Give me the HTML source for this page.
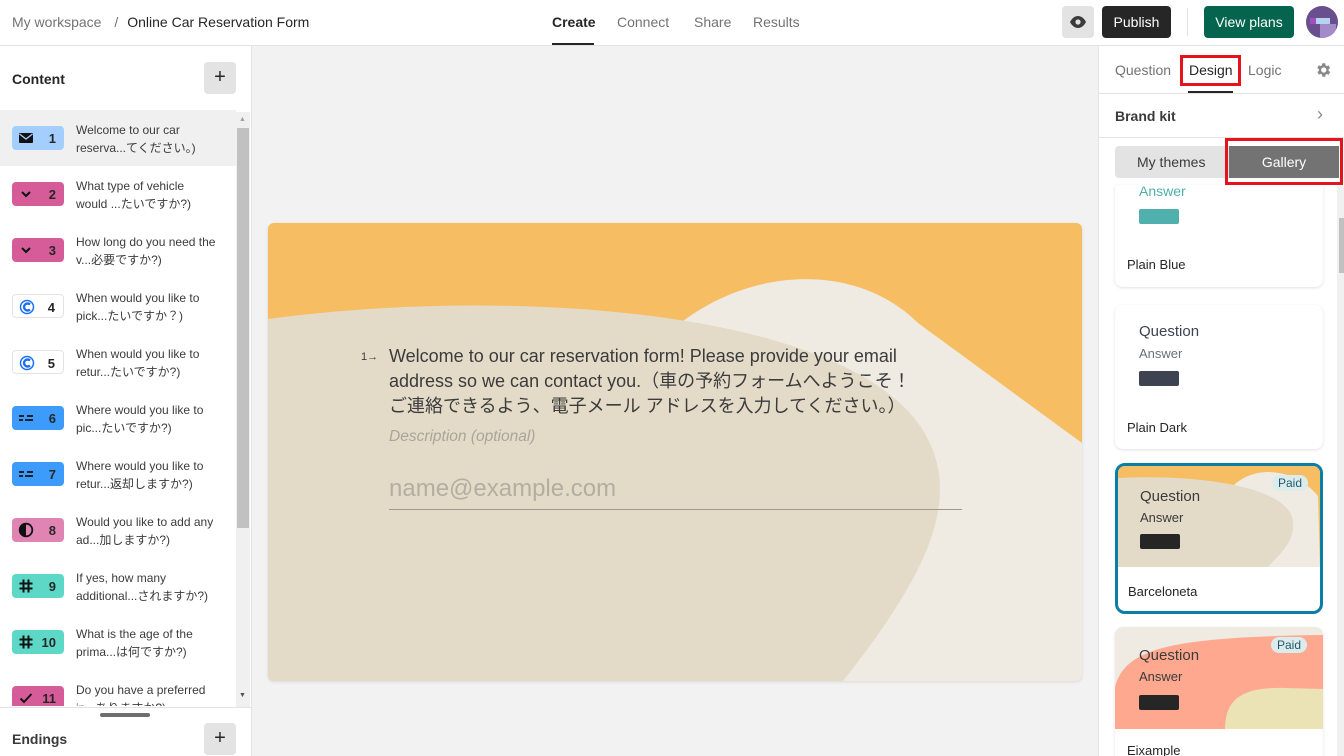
<!DOCTYPE html>
<html><head><meta charset="utf-8"><style>
*{box-sizing:border-box;margin:0;padding:0}
html,body{width:1344px;height:756px;overflow:hidden}
body{font-family:"Liberation Sans","Noto Sans CJK JP",sans-serif;background:#f2f2f2;position:relative;color:#262627}
.top{position:absolute;left:0;top:0;width:1344px;height:46px;background:#fff;border-bottom:1px solid #e3e3e3}
.abs{position:absolute}
.left{position:absolute;left:0;top:46px;width:252px;height:710px;background:#fff;border-right:1px solid #e3e3e3}
.item{position:absolute;left:0;width:236px;height:56px}
.badge{position:absolute;left:12px;width:52px;height:24px;border-radius:4px;font-size:13px;font-weight:bold}
.badge .n{position:absolute;right:8px;top:5px}
.badge .ic{position:absolute;left:6px;top:4px;width:16px;height:16px}
.it{position:absolute;left:76px;font-size:12px;line-height:18px;color:#3b3b3b;width:142px}
.right{position:absolute;left:1098px;top:46px;width:246px;height:710px;background:#fff;border-left:1px solid #e3e3e3;overflow:hidden}
.card{position:absolute;left:16px;width:208px;background:#fff;border-radius:8px;box-shadow:0 1px 3px rgba(0,0,0,.12);overflow:hidden}
.paid{position:absolute;right:16px;background:#dcecec;color:#1f5a6a;font-size:12px;border-radius:9px;padding:1px 6px}
</style></head><body>
<div class="top">
 <div class="abs" style="left:12px;top:14px;font-size:14px;color:#737373">My workspace <span style="margin:0 9px">/</span><span style="color:#262627">Online Car Reservation Form</span></div>
 <div class="abs" style="left:552px;top:14px;font-size:14px;font-weight:bold">Create</div>
 <div class="abs" style="left:552px;top:43px;width:42px;height:2px;background:#262627"></div>
 <div class="abs" style="left:617px;top:14px;font-size:14px;color:#737373">Connect</div>
 <div class="abs" style="left:694px;top:14px;font-size:14px;color:#737373">Share</div>
 <div class="abs" style="left:753px;top:14px;font-size:14px;color:#737373">Results</div>
 <div class="abs" style="left:1062px;top:6px;width:32px;height:32px;background:#e3e3e3;border-radius:4px"><svg width="32" height="32" viewBox="0 0 32 32"><path d="M8 16c2-4 5-6 8-6s6 2 8 6c-2 4-5 6-8 6s-6-2-8-6z" fill="#3b3b3b"/><circle cx="16" cy="16" r="2.6" fill="#e3e3e3"/></svg></div>
 <div class="abs" style="left:1102px;top:6px;width:69px;height:32px;background:#262627;border-radius:4px;color:#fff;font-size:14px;text-align:center;line-height:32px">Publish</div>
 <div class="abs" style="left:1187px;top:8px;width:1px;height:28px;background:#e3e3e3"></div>
 <div class="abs" style="left:1204px;top:6px;width:90px;height:32px;background:#04644e;border-radius:4px;color:#fff;font-size:14px;text-align:center;line-height:32px">View plans</div>
 <div class="abs" style="left:1306px;top:6px;width:32px;height:32px;border-radius:50%;background:#6a4f8e;overflow:hidden"><div class="abs" style="left:4px;top:12px;width:6px;height:6px;background:#a04fbf"></div><div class="abs" style="left:10px;top:12px;width:14px;height:6px;background:#b6d4f0"></div><div class="abs" style="left:14px;top:18px;width:16px;height:14px;background:#a48ac8"></div></div>
</div>

<div class="left">
 <div class="abs" style="left:12px;top:25px;font-size:14px;font-weight:bold">Content</div>
 <div class="abs" style="left:204px;top:16px;width:32px;height:32px;background:#e3e3e3;border-radius:4px;text-align:center;line-height:31px;font-size:20px">+</div>
 <div class="abs" style="left:0;top:64px;width:236px;height:56px;background:#f0f0f0"></div>
 <div class="abs" style="left:236px;top:66px;width:14px;height:596px;background:#f0f0f0"></div>
 <div class="abs" style="left:237px;top:82px;width:12px;height:400px;background:#c1c1c1"></div>
 <div class="abs" style="left:239px;top:70px;font-size:7px;color:#a0a0a0">▲</div>
 <div class="abs" style="left:239px;top:646px;font-size:7px;color:#505050">▼</div>
 <div class="abs" style="left:0;top:661px;width:252px;height:1px;background:#e3e3e3"></div>
 <div class="abs" style="left:100px;top:667px;width:50px;height:4px;border-radius:2px;background:#6e6e6e"></div>
 <div class="abs" style="left:12px;top:685px;font-size:14px;font-weight:bold;color:#3b3b3b">Endings</div>
 <div class="abs" style="left:204px;top:677px;width:32px;height:32px;background:#e3e3e3;border-radius:4px;text-align:center;line-height:31px;font-size:20px">+</div>
</div>

<div style="position:absolute;left:0;top:110px">
 <div class="item" style="top:0"><div class="badge" style="top:16px;background:#a3cefe"><svg class="ic" viewBox="0 0 16 16"><rect x="1" y="3" width="14" height="10" rx="1" fill="#111"/><path d="M1.5 4l6.5 5 6.5-5" stroke="#a3cefe" stroke-width="1.3" fill="none"/></svg><span class="n">1</span></div><div class="it" style="top:11px">Welcome to our car<br>reserva...てください。)</div></div>
 <div class="item" style="top:56px"><div class="badge" style="top:16px;background:#d65c99"><svg class="ic" viewBox="0 0 16 16"><path d="M4 6l4 4 4-4" stroke="#111" stroke-width="2" fill="none"/></svg><span class="n">2</span></div><div class="it" style="top:11px">What type of vehicle<br>would ...たいですか?)</div></div>
 <div class="item" style="top:112px"><div class="badge" style="top:16px;background:#d65c99"><svg class="ic" viewBox="0 0 16 16"><path d="M4 6l4 4 4-4" stroke="#111" stroke-width="2" fill="none"/></svg><span class="n">3</span></div><div class="it" style="top:11px">How long do you need the<br>v...必要ですか?)</div></div>
 <div class="item" style="top:168px"><div class="badge" style="top:16px;background:#fff;border:1px solid #e3e3e3"><svg class="ic" viewBox="0 0 16 16"><circle cx="8" cy="8" r="6.5" fill="none" stroke="#1a6ff5" stroke-width="1.5"/><path d="M11 5.5a3.5 3.5 0 1 0 0 5" fill="none" stroke="#1a6ff5" stroke-width="2.4"/></svg><span class="n">4</span></div><div class="it" style="top:11px">When would you like to<br>pick...たいですか？)</div></div>
 <div class="item" style="top:224px"><div class="badge" style="top:16px;background:#fff;border:1px solid #e3e3e3"><svg class="ic" viewBox="0 0 16 16"><circle cx="8" cy="8" r="6.5" fill="none" stroke="#1a6ff5" stroke-width="1.5"/><path d="M11 5.5a3.5 3.5 0 1 0 0 5" fill="none" stroke="#1a6ff5" stroke-width="2.4"/></svg><span class="n">5</span></div><div class="it" style="top:11px">When would you like to<br>retur...たいですか?)</div></div>
 <div class="item" style="top:280px"><div class="badge" style="top:16px;background:#3d9bfb"><svg class="ic" viewBox="0 0 16 16"><path d="M1 6h5M9 6h6M1 10h4M7 10h8" stroke="#111" stroke-width="1.8"/></svg><span class="n">6</span></div><div class="it" style="top:11px">Where would you like to<br>pic...たいですか?)</div></div>
 <div class="item" style="top:336px"><div class="badge" style="top:16px;background:#3d9bfb"><svg class="ic" viewBox="0 0 16 16"><path d="M1 6h5M9 6h6M1 10h4M7 10h8" stroke="#111" stroke-width="1.8"/></svg><span class="n">7</span></div><div class="it" style="top:11px">Where would you like to<br>retur...返却しますか?)</div></div>
 <div class="item" style="top:392px"><div class="badge" style="top:16px;background:#e085b3"><svg class="ic" viewBox="0 0 16 16"><circle cx="8" cy="8" r="6.3" fill="none" stroke="#111" stroke-width="1.8"/><path d="M8 2a6 6 0 0 0 0 12z" fill="#111"/></svg><span class="n">8</span></div><div class="it" style="top:11px">Would you like to add any<br>ad...加しますか?)</div></div>
 <div class="item" style="top:448px"><div class="badge" style="top:16px;background:#5dd8c6"><svg class="ic" viewBox="0 0 16 16"><path d="M5.5 1.5v13M10.5 1.5v13M1.5 5.5h13M1.5 10.5h13" stroke="#111" stroke-width="2"/></svg><span class="n">9</span></div><div class="it" style="top:11px">If yes, how many<br>additional...されますか?)</div></div>
 <div class="item" style="top:504px"><div class="badge" style="top:16px;background:#5dd8c6"><svg class="ic" viewBox="0 0 16 16"><path d="M5.5 1.5v13M10.5 1.5v13M1.5 5.5h13M1.5 10.5h13" stroke="#111" stroke-width="2"/></svg><span class="n">10</span></div><div class="it" style="top:11px">What is the age of the<br>prima...は何ですか?)</div></div>
 <div class="item" style="top:560px;height:36px;overflow:hidden"><div class="badge" style="top:16px;background:#d65c99"><svg class="ic" viewBox="0 0 16 16"><path d="M2.5 8.5l3.5 3.5 7.5-8" stroke="#111" stroke-width="2" fill="none"/></svg><span class="n">11</span></div><div class="it" style="top:11px">Do you have a preferred<br>in...ありますか?)</div></div>
</div>

<div class="abs" style="left:268px;top:223px;width:814px;height:458px;border-radius:6px;overflow:hidden;background:#f7bd63;box-shadow:0 1px 3px rgba(0,0,0,.1)">
 <svg width="814" height="458" class="abs" style="left:0;top:0">
  <path d="M400 110 C480 40 590 40 650 100 L814 220 L814 458 L560 458 Z" fill="#efeae2"/>
  <path d="M0 96 C220 66 560 80 650 200 C700 270 660 350 575 458 L0 458 Z" fill="#e3dbc8"/>
 </svg>
 <div class="abs" style="left:93px;top:128px;font-size:11px;color:#3b3b3b">1→</div>
 <div class="abs" style="left:121px;top:121px;width:575px;font-size:18px;line-height:25px;color:#3b3b3b">Welcome to our car reservation form! Please provide your email address so we can contact you.（車の予約フォームへようこそ！<br>ご連絡できるよう、電子メール アドレスを入力してください。）</div>
 <div class="abs" style="left:121px;top:205px;font-size:15.5px;font-style:italic;color:#aaa49a">Description (optional)</div>
 <div class="abs" style="left:121px;top:252px;font-size:24px;color:#b4ada2">name@example.com</div>
 <div class="abs" style="left:121px;top:286px;width:573px;height:1px;background:#9e988e"></div>
</div>

<div class="right">
 <div class="abs" style="left:16px;top:16px;font-size:14px;color:#737373">Question</div>
 <div class="abs" style="left:90px;top:16px;font-size:14px">Design</div>
 <div class="abs" style="left:81px;top:9px;width:61px;height:31px;border:3px solid #e3141c"></div>
 <div class="abs" style="left:89px;top:45px;width:45px;height:2px;background:#262627"></div>
 <div class="abs" style="left:149px;top:16px;font-size:14px;color:#737373">Logic</div>
 <svg class="abs" style="left:215px;top:15px" width="18" height="18" viewBox="0 0 24 24"><path fill="#8a8a8a" d="M19.4 13a7.5 7.5 0 0 0 0-2l2.1-1.6-2-3.5-2.5 1a7 7 0 0 0-1.7-1L15 3h-4l-.4 2.6a7 7 0 0 0-1.7 1l-2.5-1-2 3.5L6.6 11a7.5 7.5 0 0 0 0 2l-2.1 1.6 2 3.5 2.5-1a7 7 0 0 0 1.7 1L11 21h4l.4-2.6a7 7 0 0 0 1.7-1l2.5 1 2-3.5zM13 15.5a3.5 3.5 0 1 1 0-7 3.5 3.5 0 0 1 0 7z"/></svg>
 <div class="abs" style="left:0;top:47px;width:246px;height:1px;background:#e3e3e3"></div>
 <div class="abs" style="left:16px;top:62px;font-size:14px;font-weight:bold;color:#3b3b3b">Brand kit</div>
 <div class="abs" style="left:218px;top:58px;font-size:18px;color:#8a8a8a">›</div>
 <div class="abs" style="left:0;top:91px;width:246px;height:1px;background:#e3e3e3"></div>

 <div class="card" style="top:139px;height:102px;border-radius:0 0 8px 8px">
  <div class="abs" style="left:24px;top:-2px;font-size:14px;color:#4fb0ae">Answer</div>
  <div class="abs" style="left:24px;top:24px;width:40px;height:15px;background:#4fb0ae;border-radius:2px"></div>
  <div class="abs" style="left:12px;top:72px;font-size:13px">Plain Blue</div>
 </div>
 <div class="abs" style="left:16px;top:100px;width:224px;height:32px;background:#e3e3e3;border-radius:4px"></div>
 <div class="abs" style="left:38px;top:108px;font-size:14px;color:#3b3b3b">My themes</div>
 <div class="abs" style="left:130px;top:100px;width:110px;height:32px;background:#737373;color:#fff;font-size:14px;text-align:center;line-height:32px">Gallery</div>
 <div class="abs" style="left:126px;top:92px;width:118px;height:47px;border:3px solid #e3141c"></div>
 <div class="card" style="top:259px;height:144px">
  <div class="abs" style="left:24px;top:18px;font-size:15px;color:#3d4350">Question</div>
  <div class="abs" style="left:24px;top:41px;font-size:13px;color:#6a6f78">Answer</div>
  <div class="abs" style="left:24px;top:66px;width:40px;height:15px;background:#3d4350;border-radius:2px"></div>
  <div class="abs" style="left:12px;top:115px;font-size:13px">Plain Dark</div>
 </div>
 <div class="card" style="top:417px;height:151px;border:3px solid #0a7ea4;border-radius:10px;box-shadow:none">
  <div class="abs" style="left:0;top:0;width:202px;height:101px;background:#f7bd63;overflow:hidden">
   <svg width="202" height="101" class="abs"><path d="M115 20 C135 0 175 0 200 30 L202 101 L135 101 Z" fill="#efeae2"/><path d="M0 12 C80 8 170 20 175 55 C178 75 160 90 150 101 L0 101Z" fill="#e3dbc8"/></svg>
  </div>
  <div class="paid" style="top:9px;right:12px">Paid</div>
  <div class="abs" style="left:22px;top:22px;font-size:15px;color:#3b3b3b">Question</div>
  <div class="abs" style="left:22px;top:44px;font-size:13px;color:#3b3b3b">Answer</div>
  <div class="abs" style="left:22px;top:68px;width:40px;height:15px;background:#262627;border-radius:2px"></div>
  <div class="abs" style="left:10px;top:118px;font-size:13px">Barceloneta</div>
 </div>
 <div class="card" style="top:581px;height:140px">
  <div class="abs" style="left:0;top:0;width:208px;height:102px;background:#efeae2;overflow:hidden">
   <svg width="208" height="102" class="abs"><path d="M0 60 C10 20 60 10 208 8 L208 102 L0 102Z" fill="#fea98f"/><path d="M110 102 C110 70 130 60 170 61 L208 62 L208 102Z" fill="#ebe3b6"/></svg>
  </div>
  <div class="paid" style="top:10px">Paid</div>
  <div class="abs" style="left:24px;top:20px;font-size:15px;color:#3b3b3b">Question</div>
  <div class="abs" style="left:24px;top:42px;font-size:13px;color:#3b3b3b">Answer</div>
  <div class="abs" style="left:24px;top:68px;width:40px;height:15px;background:#262627;border-radius:2px"></div>
  <div class="abs" style="left:12px;top:116px;font-size:13px">Eixample</div>
 </div>
 <div class="abs" style="left:238px;top:140px;width:8px;height:570px;background:#f0f0f0"></div>
 <div class="abs" style="left:240px;top:172px;width:5px;height:55px;background:#c1c1c1"></div>
</div>
</body></html>
